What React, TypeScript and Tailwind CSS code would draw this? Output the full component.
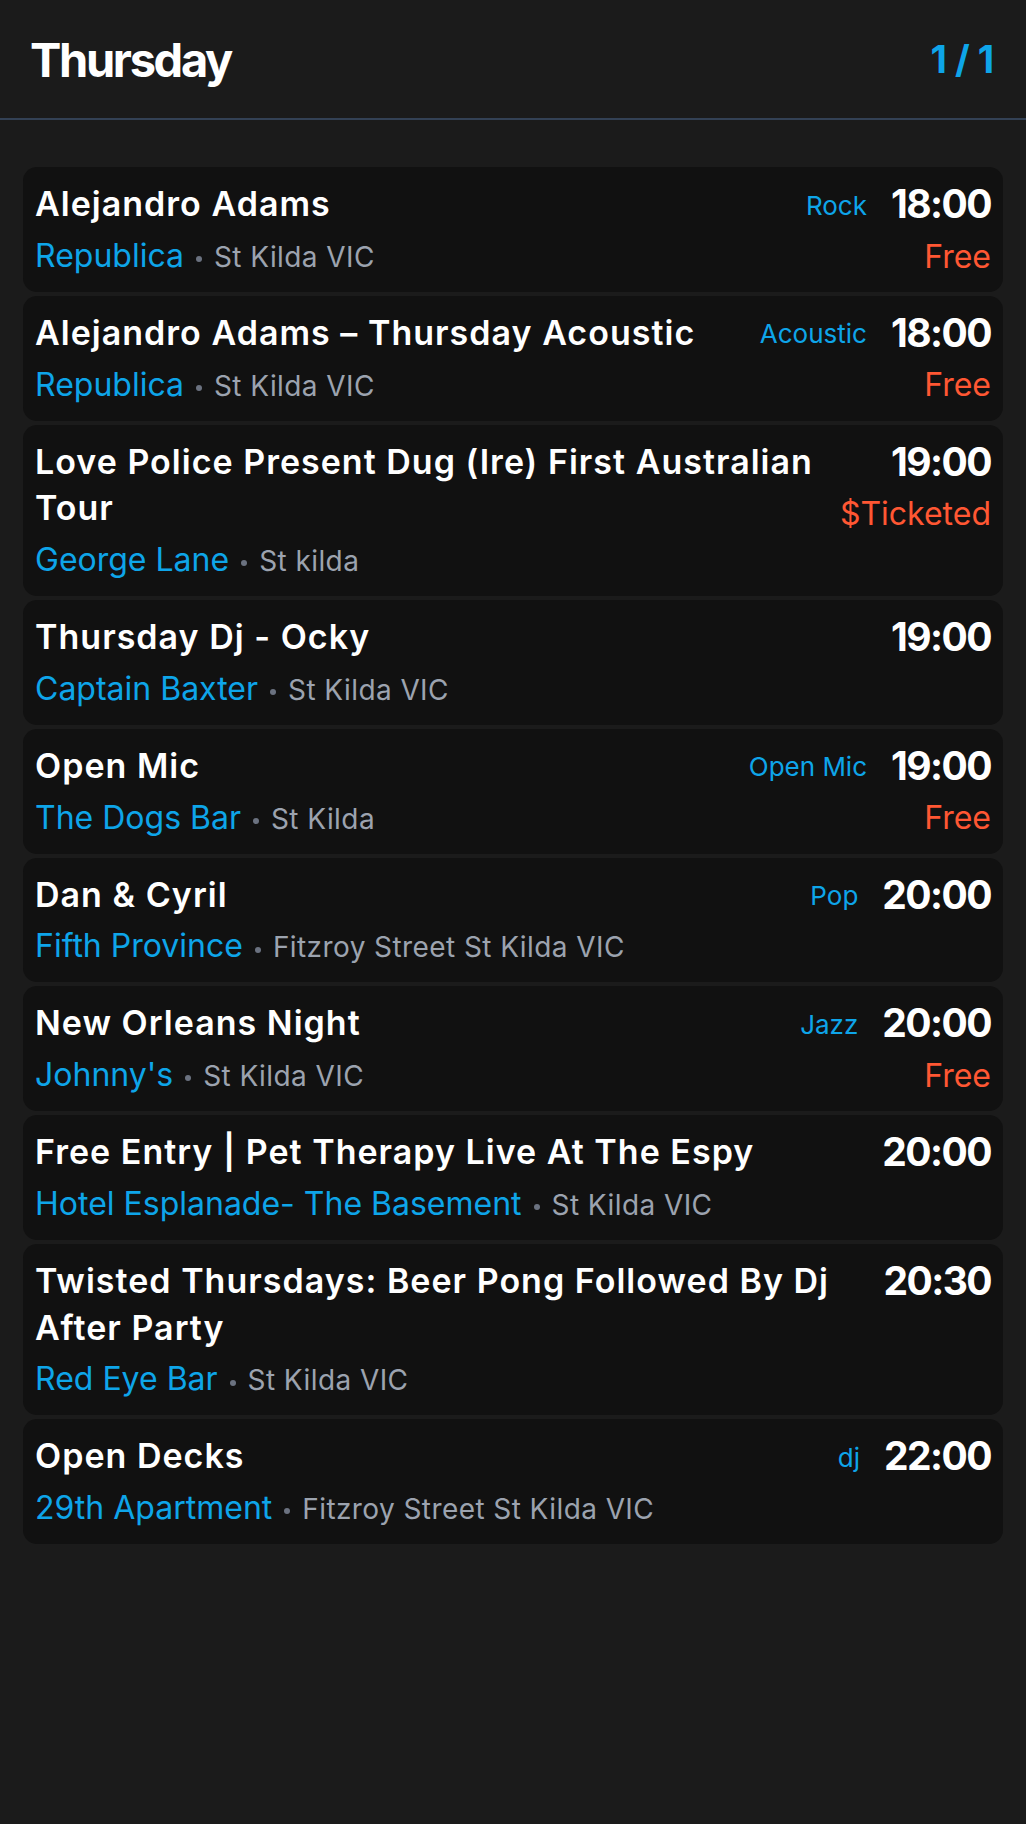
const BLUE = "text-[#0ea5e9]";

interface Gig {
  title: string;
  tag?: string;
  time: string;
  venue: string;
  place: string;
  price?: string;
}

const GIGS: Gig[] = [
  { title: "Alejandro Adams", tag: "Rock", time: "18:00", venue: "Republica", place: "St Kilda VIC", price: "Free" },
  {
    title: "Alejandro Adams – Thursday Acoustic",
    tag: "Acoustic",
    time: "18:00",
    venue: "Republica",
    place: "St Kilda VIC",
    price: "Free",
  },
  {
    title: "Love Police Present Dug (Ire) First Australian Tour",
    time: "19:00",
    venue: "George Lane",
    place: "St kilda",
    price: "$Ticketed",
  },
  { title: "Thursday Dj - Ocky", time: "19:00", venue: "Captain Baxter", place: "St Kilda VIC" },
  { title: "Open Mic", tag: "Open Mic", time: "19:00", venue: "The Dogs Bar", place: "St Kilda", price: "Free" },
  { title: "Dan & Cyril", tag: "Pop", time: "20:00", venue: "Fifth Province", place: "Fitzroy Street St Kilda VIC" },
  { title: "New Orleans Night", tag: "Jazz", time: "20:00", venue: "Johnny's", place: "St Kilda VIC", price: "Free" },
  {
    title: "Free Entry | Pet Therapy Live At The Espy",
    time: "20:00",
    venue: "Hotel Esplanade- The Basement",
    place: "St Kilda VIC",
  },
  {
    title: "Twisted Thursdays: Beer Pong Followed By Dj After Party",
    time: "20:30",
    venue: "Red Eye Bar",
    place: "St Kilda VIC",
  },
  { title: "Open Decks", tag: "dj", time: "22:00", venue: "29th Apartment", place: "Fitzroy Street St Kilda VIC" },
];

function GigCard({ gig }: { gig: Gig }) {
  return (
    <div className="flex gap-4 rounded-[14px] bg-[#111111] px-3 pt-3 pb-[11px]">
      <div className="min-w-0 flex-1">
        <div className="pt-[2px] text-[34px] font-semibold leading-[46.75px] tracking-[0.03em] text-white">
          {gig.title}
        </div>
        <div className="mt-[5px] h-[48px] text-[28px] leading-[48px]">
          <span className={`text-[32px] leading-none ${BLUE}`}>{gig.venue}</span>
          <span className="mx-3 inline-block h-[6px] w-[6px] rounded-full bg-[#6b7280] align-middle" />
          <span className="leading-none tracking-[0.015em] text-[#9ca3af]">{gig.place}</span>
        </div>
      </div>
      <div className="flex shrink-0 flex-col items-end">
        <div className="flex items-center gap-6">
          {gig.tag && <span className={`pt-[3px] text-[26px] leading-[36px] ${BLUE}`}>{gig.tag}</span>}
          <span className="text-[39px] font-bold leading-[50px] tracking-[-0.04em] text-white">{gig.time}</span>
        </div>
        {gig.price && <span className="mt-[3.5px] text-[32px] leading-[48px] text-[#ff5733]">{gig.price}</span>}
      </div>
    </div>
  );
}

export default function App() {
  return (
    <div className="min-h-screen bg-[#1b1b1b] font-['Inter','Noto_Sans',sans-serif]">
      <header className="flex h-[120px] items-center justify-between border-b-2 border-[#334155] pl-[30px] pr-8">
        <h1 className="text-[47px] font-bold leading-none tracking-[-0.05em] text-white">Thursday</h1>
        <span className={`-mr-[8px] text-[38px] font-bold leading-none tracking-[0.21em] ${BLUE}`}>1/1</span>
      </header>
      <div className="flex flex-col gap-1 px-[23px] pt-[47px]">
        {GIGS.map((g, i) => (
          <GigCard key={i} gig={g} />
        ))}
      </div>
    </div>
  );
}
